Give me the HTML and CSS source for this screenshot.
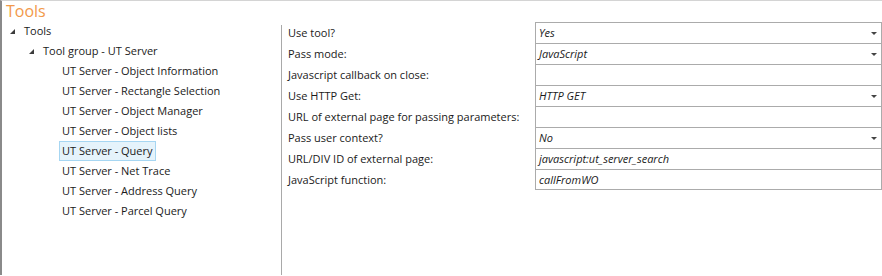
FILE: index.html
```html
<!DOCTYPE html>
<html lang="en">

<head>
    <meta charset="UTF-8">
    <title>Tools</title>
    <link rel="stylesheet" href="styles.css">
</head>

<body>
    <div class="window">
        <div class="title">Tools</div>
        <div class="main">
            <ul class="tree">
                <li class="node level-0">
                    <svg class="expander" width="5" height="5" viewBox="0 0 5 5"><polygon points="5,0 5,5 0,5" /></svg>
                    <span>Tools</span>
                </li>
                <li class="node level-1">
                    <svg class="expander" width="5" height="5" viewBox="0 0 5 5"><polygon points="5,0 5,5 0,5" /></svg>
                    <span>Tool group - UT Server</span>
                </li>
                <li class="node level-2"><span>UT Server - Object Information</span></li>
                <li class="node level-2"><span>UT Server - Rectangle Selection</span></li>
                <li class="node level-2"><span>UT Server - Object Manager</span></li>
                <li class="node level-2"><span>UT Server - Object lists</span></li>
                <li class="node level-2 selected"><span>UT Server - Query</span></li>
                <li class="node level-2"><span>UT Server - Net Trace</span></li>
                <li class="node level-2"><span>UT Server - Address Query</span></li>
                <li class="node level-2"><span>UT Server - Parcel Query</span></li>
            </ul>
            <div class="divider"></div>
            <div class="props">
                <div class="prop-label">Use tool?</div>
                <div class="prop-value combo">Yes<span class="arrow"></span></div>

                <div class="prop-label">Pass mode:</div>
                <div class="prop-value combo">JavaScript<span class="arrow"></span></div>

                <div class="prop-label">Javascript callback on close:</div>
                <div class="prop-value"></div>

                <div class="prop-label">Use HTTP Get:</div>
                <div class="prop-value combo">HTTP GET<span class="arrow"></span></div>

                <div class="prop-label">URL of external page for passing parameters:</div>
                <div class="prop-value"></div>

                <div class="prop-label">Pass user context?</div>
                <div class="prop-value combo">No<span class="arrow"></span></div>

                <div class="prop-label">URL/DIV ID of external page:</div>
                <div class="prop-value">javascript:ut_server_search</div>

                <div class="prop-label">JavaScript function:</div>
                <div class="prop-value">callFromWO</div>
            </div>
        </div>
    </div>
</body>

</html>
```

FILE: styles.css
```css
html,
body {
    margin: 0;
    padding: 0;
    background: #fff;
}

body {
    font-family: "Open Sans", "Noto Sans", sans-serif;
    font-size: 11px;
    color: #1a1a1a;
}

.window {
    height: 275px;
    border-top: 1px solid #d4d4d4;
    border-left: 2px solid #8a8a8a;
    box-sizing: border-box;
    overflow: hidden;
}

.title {
    height: 20px;
    padding-left: 4px;
    font-size: 16px;
    line-height: 20px;
    color: #f2994a;
}

.main {
    display: grid;
    grid-template-columns: 279px 1px 1fr;
    height: 254px;
}

.tree {
    list-style: none;
    margin: 0;
    padding: 0;
}

.node {
    display: flex;
    align-items: center;
    height: 20px;
}

.node span {
    padding: 0 2px;
    line-height: 18px;
    border: 1px solid transparent;
}

.expander {
    fill: #3c3c3c;
}

.level-0 {
    padding-left: 8px;
}

.level-0 .expander {
    margin-right: 6px;
}

.level-1 {
    padding-left: 27px;
}

.level-1 .expander {
    margin-right: 6px;
}

.level-2 {
    padding-left: 57px;
}

.selected span {
    background: #e5f3fb;
    border-color: #a6d6f2;
}

.divider {
    margin-top: 4px;
    background: #a9a9a9;
}

.props {
    display: grid;
    grid-template-columns: 247px 1fr;
    grid-auto-rows: 21px;
    align-content: start;
    padding: 1px 0 0 6px;
}

.prop-label {
    line-height: 21px;
    white-space: nowrap;
}

.prop-value {
    position: relative;
    border: 1px solid #ababab;
    border-bottom: none;
    padding-left: 3px;
    line-height: 20px;
    font-style: italic;
    color: #1a1a1a;
}

.prop-value:nth-last-child(1) {
    border-bottom: 1px solid #ababab;
    height: 21px;
    box-sizing: border-box;
}

.arrow {
    position: absolute;
    right: 4px;
    top: 9px;
    border-left: 3px solid transparent;
    border-right: 3px solid transparent;
    border-top: 3px solid #444;
}
```
